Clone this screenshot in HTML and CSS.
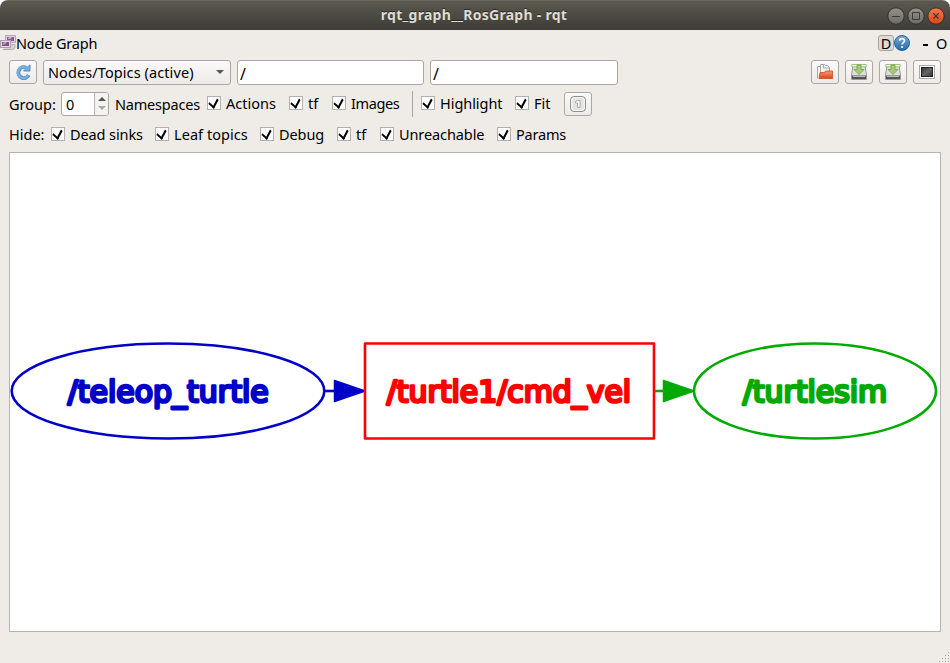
FILE: index.html
```
<!DOCTYPE html>
<html lang="en">
<head>
<meta charset="utf-8">
<title>rqt_graph__RosGraph - rqt</title>
<link rel="stylesheet" href="styles.css">
</head>
<body>
<div class="window">
  <header class="titlebar">
    <h1>rqt_graph__RosGraph - rqt</h1>
    <svg class="controls" width="60" height="20" viewBox="0 0 60 20">
      <defs>
        <linearGradient id="gray" x2="0" y2="1"><stop stop-color="#92918a"/><stop offset="1" stop-color="#6d6c66"/></linearGradient>
        <linearGradient id="orange" x2="0" y2="1"><stop stop-color="#f5764f"/><stop offset="1" stop-color="#dd4814"/></linearGradient>
      </defs>
      <circle cx="10" cy="10" r="8.2" fill="url(#gray)" stroke="#33322e"/>
      <circle cx="30" cy="10" r="8.2" fill="url(#gray)" stroke="#33322e"/>
      <circle cx="50" cy="10" r="8.2" fill="url(#orange)" stroke="#33322e"/>
      <path d="M6 10.500h8M26.500 6.500h7v7h-7z" fill="none" stroke="#3b3a36"/>
      <path d="M47.300 7.300l5.400 5.400m0-5.400l-5.400 5.400" stroke="#403a35" stroke-width="1.300"/>
    </svg>
  </header>
  <div class="dock">
    <svg width="16" height="16" viewBox="0 0 16 16">
      <path d="M5.500.5h10v7h-10z" fill="#d8d4d7" stroke="#b0a9af"/>
      <path d="M6.500 9.500h8.500v3.500l-2 1.500H4" fill="#d5d2d2" stroke="#bbb7b9"/>
      <rect x="7" y="2" width="7" height="4" fill="#99559d"/>
      <path d="M9 2h3l-1.500 2H7.500z" fill="#d2a2d6"/>
      <rect x=".5" y="5.500" width="10" height="7" fill="#e0dce0" stroke="#aaa2aa"/>
      <rect x="2" y="7" width="7" height="4" fill="#8c4891"/>
      <path d="M4 7h3l-2 2.500H2z" fill="#ca93cf"/>
      <path d="M3 14.500h8" stroke="#aaa7a8"/>
    </svg>
    <span class="name">Node Graph</span>
    <span class="d">D</span>
    <svg class="help" width="16" height="16" viewBox="0 0 16 16"><defs><linearGradient id="blue" x2="0" y2="1"><stop stop-color="#75a9d5"/><stop offset="1" stop-color="#2769a7"/></linearGradient></defs><circle cx="8" cy="8" r="7.500" fill="url(#blue)" stroke="#26649d"/><path d="M5.600 5.800C5.800 2.800 10.500 3 10.400 5.800c0 1.700-2.300 1.800-2.300 3.800" fill="none" stroke="#fff" stroke-width="1.700"/><circle cx="8.100" cy="12" r="1.100" fill="#fff"/></svg>
    <span class="dash"></span><span class="o">O</span>
  </div>
  <div class="tools">
    <button class="btn"><svg width="16" height="16" viewBox="0 0 16 16"><path d="M13.800 11.200A5.500 5.500 0 1 1 11.300 3.600" fill="none" stroke="#5790c8" stroke-width="3.800"/><path d="M8.500 7h6.500V.8l-3 2.700z" fill="#78ade0" stroke="#5790c8"/><path d="M13.400 11A5.500 5.500 0 1 1 11.800 4.300" fill="none" stroke="#78ade0" stroke-width="2.300"/></svg></button>
    <div class="combo"><span>Nodes/Topics (active)</span><i></i></div>
    <div class="field">/</div>
    <div class="field second">/</div>
    <div class="right">
      <button class="btn"><svg width="16" height="16" viewBox="0 0 16 16"><defs><linearGradient id="folder" x2="0" y2="1"><stop stop-color="#f69b74"/><stop offset="1" stop-color="#db451b"/></linearGradient></defs><path d="M.5 14.500v-12h3v-2h4l1 1h2l2 2v5" fill="#f3f3f3" stroke="#a5a5a5"/><path d="M3.500 2v12M6.500 1v3h6" fill="none" stroke="#aaa"/><path d="M2 14.500L3 8.500h4.500l1-1.500h7v7.500z" fill="url(#folder)" stroke="#d2481c" stroke-width=".8"/></svg></button>
      <button class="btn"><svg width="16" height="16" viewBox="0 0 16 16"><path d="M2 1.500h12l1.500 9.500v4.500H.5V11z" fill="#dedede" stroke="#999"/><path d="M1 11.500h14v3.500H1z" fill="#555"/><path d="M2 12.500h12" stroke="#bbb"/><path d="M.8.500h14.400v2.300H.8z" fill="#fff" stroke="#86b366" stroke-width=".8"/><path d="M6 1v4.500H3l5 5 5-5h-3V1z" fill="#a5cf70" stroke="#6fa047" stroke-width=".8"/></svg></button>
      <button class="btn"><svg width="16" height="16" viewBox="0 0 16 16"><path d="M2 1.500h12l1.500 9.500v4.500H.5V11z" fill="#dedede" stroke="#999"/><path d="M1 11.500h14v3.500H1z" fill="#555"/><path d="M2 12.500h12" stroke="#bbb"/><path d="M.8.500h14.400v2.300H.8z" fill="#fff" stroke="#86b366" stroke-width=".8"/><path d="M6 1v4.500H3l5 5 5-5h-3V1z" fill="#a5cf70" stroke="#6fa047" stroke-width=".8"/></svg></button>
      <button class="btn"><svg width="16" height="16" viewBox="0 0 16 16"><defs><linearGradient id="screen" x2="1" y2="1"><stop stop-color="#353535"/><stop offset=".5" stop-color="#666"/><stop offset="1" stop-color="#343434"/></linearGradient></defs><rect x=".5" y="1.500" width="15" height="13" fill="#fff" stroke="#aaa"/><rect x="2.500" y="3.500" width="11" height="9" fill="url(#screen)" stroke="#222"/></svg></button>
    </div>
  </div>
  <div class="options">
    <span class="lead group">Group:</span>
    <div class="spin"><span>0</span><div><i class="up"></i><i class="down"></i></div></div>
    <span class="namespaces">Namespaces</span>
    <label class="check actions"><b></b><span>Actions</span></label>
    <label class="check tf"><b></b><span>tf</span></label>
    <label class="check images"><b></b><span>Images</span></label>
    <i class="separator"></i>
    <label class="check highlight"><b></b><span>Highlight</span></label>
    <label class="check fit"><b></b><span>Fit</span></label>
    <button class="btn"><svg width="16" height="16" viewBox="0 0 16 16"><rect x=".7" y=".7" width="14.600" height="14.600" rx="3" fill="#e4e4e2" stroke="#777974"/><rect x="1.700" y="1.700" width="12.600" height="12.600" rx="2" fill="none" stroke="#fff"/><path d="M5.500 5.500l2-1H10v7H7.500V7h-2z" fill="#fff" stroke="#999" stroke-width=".8"/></svg></button>
  </div>
  <div class="options hide">
    <span class="lead">Hide:</span>
    <label class="check dead"><b></b><span>Dead sinks</span></label>
    <label class="check leaf"><b></b><span>Leaf topics</span></label>
    <label class="check debug"><b></b><span>Debug</span></label>
    <label class="check tf"><b></b><span>tf</span></label>
    <label class="check unreachable"><b></b><span>Unreachable</span></label>
    <label class="check params"><b></b><span>Params</span></label>
  </div>
  <main>
    <svg class="graph" width="930" height="478" viewBox="10 153 930 478">
      <g class="teleop"><ellipse cx="168" cy="391" rx="156.300" ry="47.500"/><path d="M325 391h10"/><path class="arrow" d="M334.500 380.500v21L365 391z"/><text x="67.700" y="401.800" textLength="201" lengthAdjust="spacingAndGlyphs">/teleop_turtle</text></g>
      <g class="topic"><rect x="365" y="343.500" width="289" height="95" /><text x="386.700" y="401.800" textLength="244.500" lengthAdjust="spacingAndGlyphs">/turtle1/cmd_vel</text></g>
      <g class="sim"><ellipse cx="815" cy="391" rx="121" ry="47.500"/><path d="M655 391h10"/><path class="arrow" d="M663.500 380.500v21L694 391z"/><text x="742.700" y="401.800" textLength="144.500" lengthAdjust="spacingAndGlyphs">/turtlesim</text></g>
    </svg>
  </main>
  <footer><svg width="12" height="12" viewBox="0 0 12 12"><path d="M10 1h1v1h-1zM7 4h1v1H7zm3 0h1v1h-1zM4 7h1v1H4zm3 0h1v1H7zm3 0h1v1h-1zM1 10h1v1H1zm3 0h1v1H4zm3 0h1v1H7zm3 0h1v1h-1z" fill="#aaa7a2"/></svg></footer>
</div>
</body>
</html>
```
FILE: styles.css
```
* { box-sizing: border-box; }
body { margin: 0; background: #fff; color: #000; font: 14.5px/20px "Noto Sans", "Open Sans", sans-serif; }
.window { width: 950px; height: 663px; display: flex; flex-direction: column; background: #efebe7; border-radius: 8px 8px 0 0; overflow: hidden; }
svg { display: block; flex: none; }
.titlebar { height: 30px; flex: none; display: grid; grid-template-columns: 1fr auto 1fr; align-items: center; background: linear-gradient(#5b594f, #3d3c37); border-top: 1px solid #6b695e; padding: 0 4px 0 2px; }
h1 { grid-column: 2; margin: 0 0 1px; font-size: 14px; line-height: 20px; color: #dfdbd2; letter-spacing: .28px; text-shadow: 0 -1px #292824; }
.controls { justify-self: end; }
.dock { height: 26px; flex: none; display: flex; align-items: center; }
.name { flex: 1; letter-spacing: -.15px; }
.d { width: 16px; height: 16px; border: 1px solid #aaa5a1; border-radius: 3px; background: #dedad8; line-height: 15px; text-align: center; }
.dash { width: 5px; height: 2px; background: #000; margin: 3px 0 0 13px; }
.o { width: 12px; margin: 0 2px 0 8px; }
.tools { height: 32px; flex: none; display: flex; align-items: center; padding: 0 9px; }
.btn { width: 28px; height: 24px; padding: 0; flex: none; display: grid; place-items: center; border: 1px solid #aca7a3; border-radius: 3px; background: linear-gradient(#fbfafa, #edeae8); }
.combo { width: 188px; height: 25px; margin: 0 6px; padding: 0 6px 0 4px; display: flex; align-items: center; justify-content: space-between; border: 1px solid #aca7a3; border-radius: 3px; background: linear-gradient(#fbfafa, #edeae8); letter-spacing: .09px; }
.combo i { border: 4px solid transparent; border-top-color: #555; border-bottom: 0; }
.field { width: 187px; height: 25px; padding-left: 2px; border: 1px solid #aca7a3; border-radius: 3px; background: #fff; line-height: 26px; font-size: 16px; }
.second { width: 188px; margin-left: 6px; }
.right { margin-left: auto; display: flex; gap: 6px; }
.options { height: 31px; flex: none; display: flex; align-items: center; padding-left: 9px; white-space: nowrap; }
.hide { height: 33px; padding-bottom: 3px; }
.lead { width: 42px; }
.group { width: 52px; }
.spin { width: 48px; height: 24px; display: flex; border: 1px solid #aca7a3; border-radius: 3px; background: #fff; overflow: hidden; }
.spin span { width: 32px; padding-left: 4px; line-height: 23px; }
.spin div { flex: 1; border-left: 1px solid #bbb6b2; background: #f5f3f1; display: flex; flex-direction: column; align-items: center; justify-content: space-evenly; }
.up { border: 4px solid transparent; border-bottom-color: #555; border-top: 0; }
.down { border: 4px solid transparent; border-top-color: #aaa; border-bottom: 0; }
.namespaces { width: 92px; margin-left: 6px; letter-spacing: -.2px; }
.check { display: flex; align-items: center; gap: 5px; margin-bottom: 1px; }
.hide .check { margin-bottom: 0; }
.check b { width: 14px; height: 14px; flex: none; border: 1px solid #b3afac; background: #fff; display: grid; place-items: center; }
.check b::before { content: ""; width: 5px; height: 8px; margin: -3px 1px 0 0; border: solid #000; border-width: 0 2px 2px 0; transform: rotate(28deg) skewY(12deg); }
.actions { width: 82px; }
.tf { width: 43px; }
.images { width: 80px; letter-spacing: -.4px; }
.highlight { width: 94px; letter-spacing: -.05px; }
.fit { width: 49px; }
.separator { width: 1px; height: 26px; background: #aaa5a1; margin-right: 8px; }
.dead { width: 104px; letter-spacing: -.1px; }
.leaf { width: 105px; letter-spacing: .05px; }
.debug { width: 77px; letter-spacing: -.1px; }
.unreachable { width: 117px; letter-spacing: -.1px; }
.params { letter-spacing: -.2px; }
main { width: 932px; height: 480px; flex: none; margin-left: 9px; border: 1px solid #b6b2ae; background: #fff; }
.graph { font: 30px "DejaVu Sans", sans-serif; }
.graph ellipse, .graph rect, .graph path { fill: none; stroke: currentColor; stroke-width: 2.6; stroke-linejoin: round; }
.graph .arrow { fill: currentColor; stroke-width: 1.5; }
.graph text { fill: currentColor; stroke: currentColor; stroke-width: 2.800; stroke-linejoin: round; text-rendering: geometricPrecision; }
.teleop { color: #0000c8; }
.topic { color: #f00; }
.sim { color: #00aa00; }
footer { flex: 1; display: flex; align-items: flex-end; justify-content: flex-end; }
```
